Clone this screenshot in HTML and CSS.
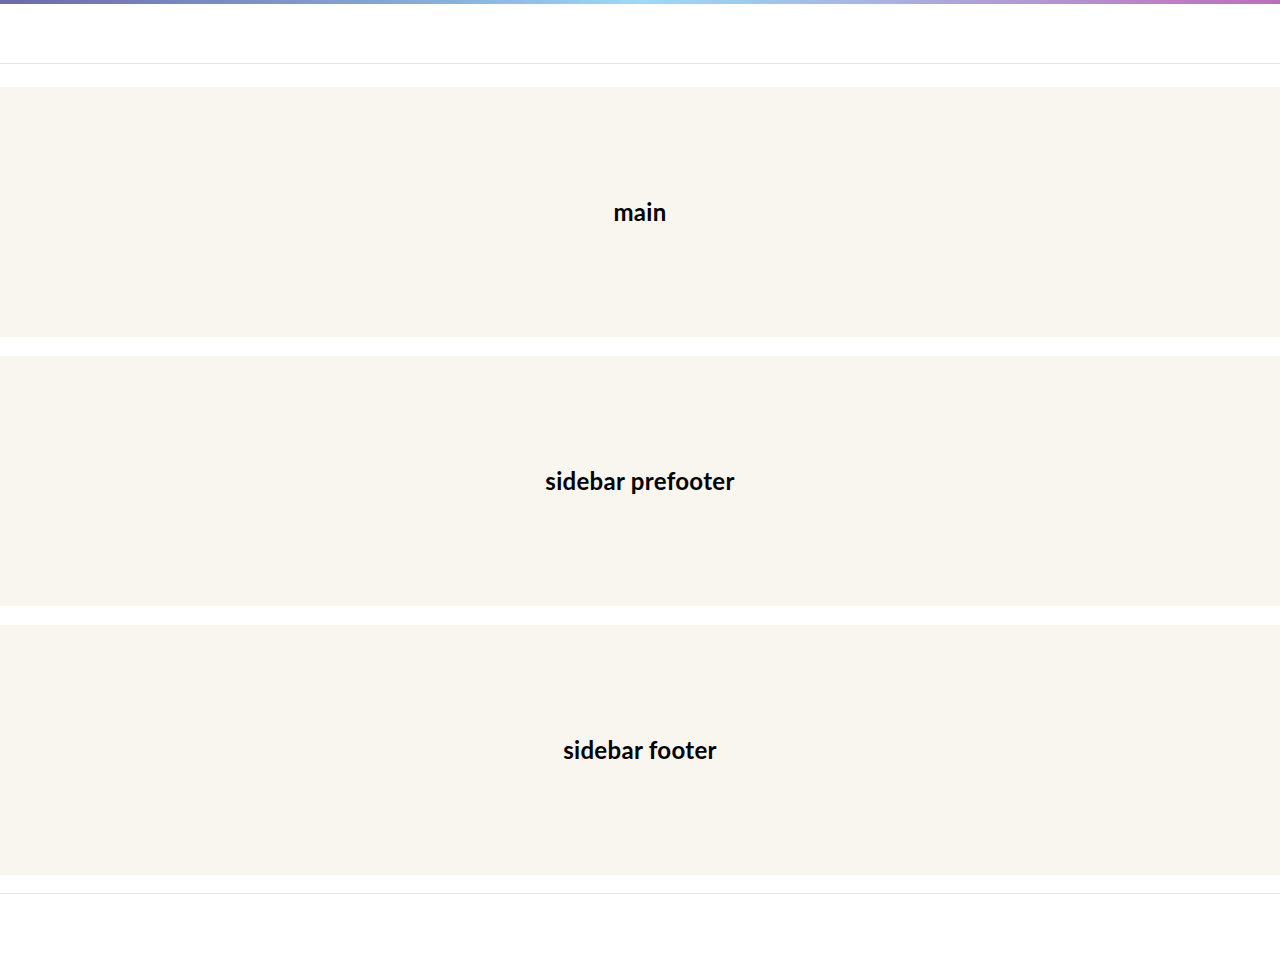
FILE: index.html
```html
<!DOCTYPE html>
<html lang="en">
<head>
<meta charset="utf-8">
<title>Layout</title>
<link rel="stylesheet" href="styles.css">
</head>
<body>
<div class="topbar"></div>
<header class="site-header"></header>
<div class="content">
  <section class="block"><h2 class="block-title">main</h2></section>
  <section class="block"><h2 class="block-title">sidebar prefooter</h2></section>
  <section class="block"><h2 class="block-title">sidebar footer</h2></section>
</div>
<footer class="site-footer"></footer>
</body>
</html>
```
FILE: styles.css
```css
html, body {
  margin: 0;
  padding: 0;
  background: #ffffff;
}
body {
  font-family: "Lato", "Open Sans", sans-serif;
  color: #000;
}
.topbar {
  height: 4px;
  background: linear-gradient(90deg, #6c6aa9 0%, #8aaede 35%, #9ad9f9 50%, #a9aee2 70%, #c06cbd 100%);
}
.site-header {
  height: 59px;
  border-bottom: 1px solid #e6e6e6;
}
.content {
  display: flex;
  flex-direction: column;
  gap: 19px;
  padding-top: 23px;
  padding-bottom: 18px;
}
.block {
  height: 250px;
  background: #f9f5ef;
  display: flex;
  align-items: center;
  justify-content: center;
}
.block-title {
  margin: 0;
  font-size: 24px;
  font-weight: 700;
  line-height: 1;
  letter-spacing: 0.3px;
}
.site-footer {
  height: 66px;
  border-top: 1px solid #e6e6e6;
}
```
